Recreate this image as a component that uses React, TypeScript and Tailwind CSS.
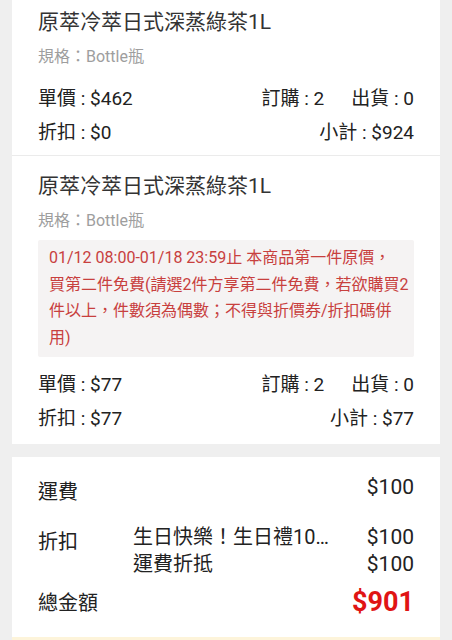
import React from "react";

function Row({ left, right }: { left: React.ReactNode; right: React.ReactNode }) {
  return (
    <div className="flex h-[34px] items-center justify-between text-[19px] text-[#222]">
      <div>{left}</div>
      <div className="flex gap-[27px]">{right}</div>
    </div>
  );
}

function Item({
  last,
  first,
  note,
  price,
  discount,
  subtotal,
}: {
  last?: boolean;
  first?: boolean;
  note?: boolean;
  price: string;
  discount: string;
  subtotal: string;
}) {
  return (
    <div
      className={
        "px-[26px] " +
        (first ? "pt-[8px] " : "pt-[16px] ") +
        (last ? "pb-[8px]" : "pb-[5px] border-b border-[#ebebeb]")
      }
    >
      <div className="text-[21px] leading-[28px] text-[#333]">原萃冷萃日式深蒸綠茶1L</div>
      <div className="mt-[11px] text-[16px] leading-[20px] text-[#9e9e9e]">規格：Bottle瓶</div>
      {note ? (
        <div className="mt-[9px] mb-[11px] rounded-[2px] bg-[#f5f3f3] px-[11px] py-[5px] text-[16px] leading-[26.7px] text-[#c8403e]">
          <div className="whitespace-nowrap">01/12 08:00-01/18 23:59止 本商品第一件原價，</div>
          <div className="whitespace-nowrap">買第二件免費(請選2件方享第二件免費，若欲購買2</div>
          <div className="whitespace-nowrap">件以上，件數須為偶數；不得與折價券/折扣碼併</div>
          <div className="whitespace-nowrap">用)</div>
        </div>
      ) : (
        <div className="h-[15px]" />
      )}
      <Row
        left={<>單價 : {price}</>}
        right={
          <>
            <span>訂購 : 2</span>
            <span>出貨 : 0</span>
          </>
        }
      />
      <Row left={<>折扣 : {discount}</>} right={<span>小計 : {subtotal}</span>} />
    </div>
  );
}

export default function App() {
  return (
    <div className="h-[640px] overflow-hidden bg-[#efefef] px-3 font-[family-name:Roboto,'Noto_Sans_CJK_TC',sans-serif]">
      <div className="bg-white">
        <Item first price="$462" discount="$0" subtotal="$924" />
        <Item last note price="$77" discount="$77" subtotal="$77" />
      </div>
      <div className="mt-[13px] bg-white">
        <div className="px-[26px] pt-[17px] pb-[19px] text-[#222]">
          <div className="flex items-start">
            <div className="mt-[5px] w-[95px] text-[20px] leading-[27px]">運費</div>
            <div className="flex-1" />
            <div className="text-[21px] leading-[27px]">$100</div>
          </div>
          <div className="mt-[18px] flex items-start">
            <div className="mt-[5px] w-[95px] shrink-0 text-[20px] leading-[27px]">折扣</div>
            <div className="min-w-0 flex-1">
              <div className="flex items-start justify-between">
                <div className="w-[200px] overflow-hidden text-ellipsis whitespace-nowrap text-[20px] leading-[27px]">
                  生日快樂！生日禮100元折價券
                </div>
                <div className="text-[21px] leading-[27px]">$100</div>
              </div>
              <div className="flex items-start justify-between">
                <div className="text-[20px] leading-[27px]">運費折抵</div>
                <div className="text-[21px] leading-[27px]">$100</div>
              </div>
            </div>
          </div>
          <div className="mt-[8px] flex items-center justify-between">
            <div className="mt-[4px] text-[20px] leading-[27px]">總金額</div>
            <div className="text-[27px] font-bold leading-[32px] text-[#e01414]">$901</div>
          </div>
        </div>
        <div className="h-10 bg-[#fdf4da]" />
      </div>
    </div>
  );
}
